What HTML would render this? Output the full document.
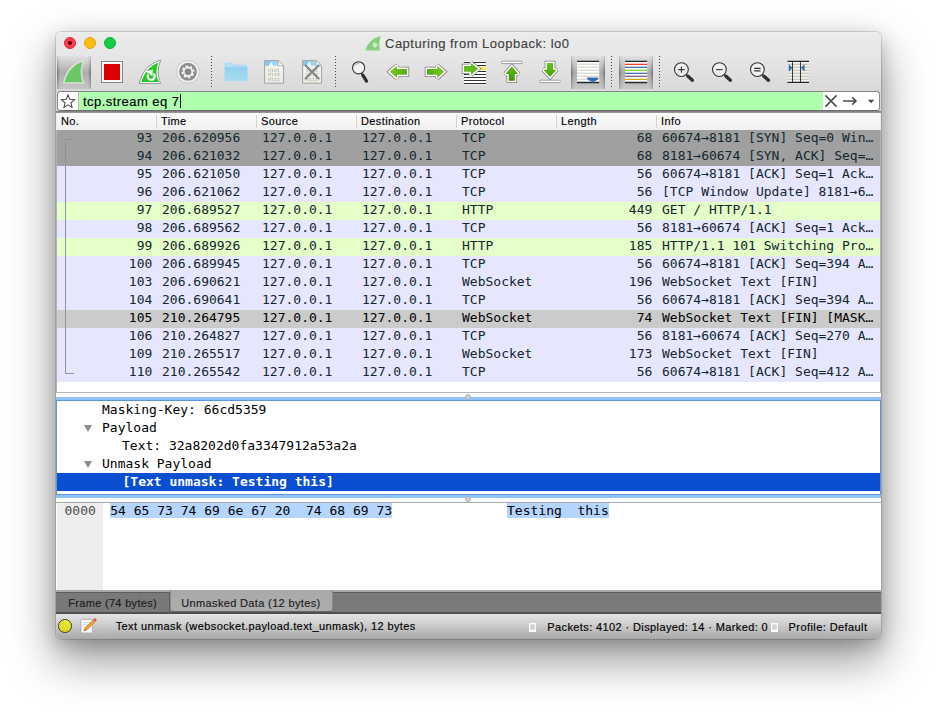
<!DOCTYPE html>
<html>
<head>
<meta charset="utf-8">
<title>Capturing from Loopback: lo0</title>
<style>
html,body{margin:0;padding:0;background:#fff;}
body{width:937px;height:719px;position:relative;overflow:hidden;font-family:"Liberation Sans",sans-serif;color:#000;}
.a{position:absolute;}
svg{position:absolute;overflow:visible;}
#win{left:56px;top:32px;width:825px;height:607px;border-radius:5px;background:#ececec;
 box-shadow:0 0 0 1px rgba(0,0,0,.13),0 20px 46px 2px rgba(0,0,0,.40),0 6px 18px rgba(0,0,0,.18);}
#chrome{left:56px;top:32px;width:825px;height:81px;border-radius:5px 5px 0 0;
 background:linear-gradient(#f4f4f4 0,#ebebeb 1px,#e7e7e7 22px,#d9d9d9 60px,#d6d6d6 82px);}
.tl{position:absolute;top:37px;width:12px;height:12px;border-radius:50%;box-sizing:border-box;}
#title{left:385px;top:36px;font-size:13px;line-height:16px;color:#3d3d3d;letter-spacing:.5px;-webkit-text-stroke:.12px #3d3d3d;white-space:nowrap;}
.pressed{top:56px;width:34px;height:33px;background:linear-gradient(rgba(0,0,0,.02),rgba(0,0,0,.23) 50%,rgba(0,0,0,.09));}
.pressed:before,.pressed:after{content:"";position:absolute;top:0;height:33px;width:3px;-webkit-mask-image:linear-gradient(rgba(0,0,0,.3),#000 45%,#000 60%,rgba(0,0,0,.4));mask-image:linear-gradient(rgba(0,0,0,.3),#000 45%,#000 60%,rgba(0,0,0,.4));}
.pressed:before{left:0;background:linear-gradient(to right,rgba(0,0,0,.36),rgba(0,0,0,.14) 1.5px,rgba(0,0,0,0));}
.pressed:after{right:0;background:linear-gradient(to left,rgba(0,0,0,.36),rgba(0,0,0,.14) 1.5px,rgba(0,0,0,0));}
.sep{top:56px;width:1px;height:31px;background:repeating-linear-gradient(#4a4a4a 0,#4a4a4a 1px,transparent 1px,transparent 3px);}
#fbox{left:57px;top:91px;width:823px;height:20px;box-sizing:border-box;border:1px solid #858585;border-bottom-color:#6c6c6c;border-radius:3.5px;background:#fff;overflow:hidden;}
#fgreen{left:20.4px;top:0;width:744.4px;height:18px;background:#afffaf;border-left:1px solid #bdbdbd;box-sizing:border-box;}
#ftext{left:83px;top:94px;font-size:13px;line-height:16px;letter-spacing:.45px;-webkit-text-stroke:.15px;white-space:nowrap;}
#fshadow{left:56px;top:111px;width:825px;height:2px;background:linear-gradient(#7b7b7b,#a0a0a0);}
#hdr{left:57px;top:113px;width:823px;height:17px;background:linear-gradient(#fafafa,#f1f1f1);font-size:11px;line-height:13px;letter-spacing:.4px;-webkit-text-stroke:.15px #000;}
#hdr span{position:absolute;top:2px;}
#hdr i{position:absolute;top:2px;width:1px;height:13px;background:#d2d2d2;}
.mono{font-family:"DejaVu Sans Mono","Liberation Mono",monospace;font-size:13px;}
#list{left:56px;top:130px;width:825px;height:263px;background:#fff;box-sizing:border-box;border:1px solid #b2b2b2;border-top:0;}
#rows{left:57px;top:130px;width:823px;color:#12272e;}
.row{position:relative;height:18px;line-height:18px;white-space:pre;}
.row span{position:absolute;top:-1px;}
.c0{left:0;width:95.3px;text-align:right;}
.c1{left:105px}.c2{left:205px}.c3{left:305px}.c4{left:405px}
.c5{left:500px;width:95.3px;text-align:right;}
.c6{left:605px}
.tcp{background:#e7e6ff}.grn{background:#e4ffc7}.syn{background:#a0a0a0}.sel{background:#cbcbcb;color:#000}
.split{left:56px;width:825px;background:#fbfbfb;}
.dot{width:6px;height:6px;border-radius:50%;background:#d2d2d2;border:1px solid #adadad;box-sizing:border-box;}
#detail{left:0;top:7px;width:825px;height:95px;box-sizing:border-box;border:1px solid #5f95d8;background:#fff;box-shadow:0 0 0 3px #8fc3fd;}
#dclip{left:56px;top:393px;width:825px;height:110px;overflow:hidden;}
.dl{position:absolute;left:57px;width:823px;height:18px;line-height:18px;white-space:pre;}
.tri{position:absolute;width:0;height:0;border-left:4.5px solid transparent;border-right:4.5px solid transparent;border-top:7px solid #8c8c8c;}
#hex{left:56px;top:502px;width:825px;height:88px;background:#fff;box-sizing:border-box;border-top:1px solid #aaa;}
#hexcol{left:57px;top:503px;width:46px;height:87px;background:#ededed;}
.hl{background:#b5d5ff;}
#tabs{left:56px;top:590px;width:825px;height:24px;background:linear-gradient(#5c5c5c,#5c5c5c 1px,#7a7a7a 1px);box-sizing:border-box;border-top:2px solid #a9a9a9;border-bottom:2px solid #505050;}
#status{left:56px;top:614px;width:825px;height:25px;border-radius:0 0 5px 5px;background:linear-gradient(#e3e3e3,#cfcfcf 40%,#a8a8a8);}
.st{position:absolute;-webkit-text-stroke:.15px;font-size:11px;line-height:13px;white-space:nowrap;top:621px;}
.grip{position:absolute;top:622.5px;width:7px;height:9.5px;background:#fbfbfb;}
.grip:after{content:"";position:absolute;left:0.7px;top:1.9px;width:5.4px;height:5.4px;border-radius:50%;background:#d4d4d4;}
</style>
</head>
<body>
<div class="a" id="win"></div>
<div class="a" id="chrome"></div>

<!-- traffic lights -->
<div class="tl" style="left:64px;background:#fc3f4b;border:1px solid #e0262f"></div>
<div class="a" style="left:67.7px;top:40.7px;width:4.6px;height:4.6px;border-radius:50%;background:#4d0003"></div>
<div class="tl" style="left:84px;background:#fdbc10;border:1px solid #dfa21b"></div>
<div class="tl" style="left:104px;background:#14cb45;border:1px solid #10b23a"></div>

<!-- title -->
<svg style="left:0;top:0" width="400" height="60" viewBox="0 0 400 60">
 <defs><linearGradient id="gT" x1="0" x2="0" y1="0" y2="1"><stop offset="0" stop-color="#82d27a"/><stop offset=".8" stop-color="#7fce77"/><stop offset="1" stop-color="#a4d89f"/></linearGradient></defs>
 <path d="M365.2,50.8 C367.2,43.6 372.4,37.8 380.9,35.9 C378.7,41 378.7,46 380.1,50.8 Z" fill="url(#gT)"/>
 <circle cx="375" cy="45" r="2.2" fill="#cdeec9" stroke="#c3e9be" stroke-width="1.4" stroke-dasharray="1.1 0.9"/>
</svg>
<div class="a" id="title">Capturing from Loopback: lo0</div>

<!-- toolbar -->
<div class="a pressed" style="left:57px"></div>
<div class="a pressed" style="left:571px"></div>
<div class="a pressed" style="left:619px"></div>
<div class="a sep" style="left:211px"></div>
<div class="a sep" style="left:335px"></div>
<div class="a sep" style="left:611px"></div>
<div class="a sep" style="left:659px"></div>

<svg id="tb" style="left:0;top:0" width="937" height="95" viewBox="0 0 937 95">
 <defs>
  <linearGradient id="gL" x1="0" x2="1" y1="0" y2="0"><stop offset="0" stop-color="#79c72c"/><stop offset="1" stop-color="#55a90f"/></linearGradient>
  <linearGradient id="gR" x1="0" x2="1" y1="0" y2="0"><stop offset="0" stop-color="#55a90f"/><stop offset="1" stop-color="#79c72c"/></linearGradient>
  <linearGradient id="gU" x1="0" x2="0" y1="0" y2="1"><stop offset="0" stop-color="#66bb1c"/><stop offset="1" stop-color="#3f900b"/></linearGradient>
  <linearGradient id="gD" x1="0" x2="0" y1="0" y2="1"><stop offset="0" stop-color="#6cc020"/><stop offset="1" stop-color="#4a9f0e"/></linearGradient>
  <linearGradient id="gP" x1="0" x2="0" y1="0" y2="1"><stop offset="0" stop-color="#f6f6f2"/><stop offset="1" stop-color="#ebebe3"/></linearGradient>
  <linearGradient id="gH" x1="0" x2="1" y1="0" y2="0"><stop offset="0" stop-color="#7dc1ed"/><stop offset="1" stop-color="#a9d8f4"/></linearGradient>
  <linearGradient id="gF" x1="0" x2="0" y1="0" y2="1"><stop offset="0" stop-color="#92d1ef"/><stop offset="1" stop-color="#a7dbf2"/></linearGradient>
 </defs>
 <!-- start capture fin -->
 <path d="M63.6,83 C66,72.5 72.5,63.5 84,60.6 C80.6,68 80.6,76 83.8,83 Z" fill="#69c861" stroke="#dcdcdc" stroke-width="1.6" stroke-linejoin="round"/>
 <!-- stop -->
 <rect x="101.5" y="61.5" width="21" height="21" fill="#f6f6f6" stroke="#868686" stroke-width="1"/>
 <rect x="104" y="64" width="16" height="16" fill="#dc0000"/>
 <!-- restart fin -->
 <path d="M139.2,83.4 C141.6,72.8 148.4,63.4 160.8,60.2 C157.4,67.6 157.2,76 160.6,83.4 Z" fill="#fff" stroke="#929292" stroke-width="1" stroke-linejoin="round"/>
 <path d="M141.5,81.9 C143.8,73.4 149.4,65.8 158.4,62.4 C155.7,69 155.9,76 158.9,81.9 Z" fill="#1fcb1f"/>
 <path d="M153.45,73.62 A3.5,3.5 0 1 1 148.33,74.3" fill="none" stroke="#fff" stroke-width="2.2"/>
 <path d="M145.4,71.5 L152.9,69.5 L152.3,76.8 L150.4,74.6 Z" fill="#fff"/>
 <!-- options gear -->
 <circle cx="188" cy="71.8" r="11.3" fill="#f4f4f4" stroke="#c4c4c4" stroke-width="0.9"/>
 <circle cx="188" cy="71.8" r="9" fill="#8e8e8e"/>
 <g fill="#efefef">
  <circle cx="188" cy="71.8" r="5.2"/>
  <g transform="translate(188 71.8) rotate(-12)">
   <rect x="-1.2" y="-6.5" width="2.4" height="13"/>
   <rect x="-1.2" y="-6.5" width="2.4" height="13" transform="rotate(45)"/>
   <rect x="-1.2" y="-6.5" width="2.4" height="13" transform="rotate(90)"/>
   <rect x="-1.2" y="-6.5" width="2.4" height="13" transform="rotate(135)"/>
  </g>
 </g>
 <circle cx="188" cy="71.8" r="3.3" fill="#878787"/>
 <!-- open folder -->
 <path d="M224.9,64.1 q0,-1.2 1.2,-1.2 h5 q0.8,0 1.3,0.7 l1,1.5 h12.6 q1.2,0 1.2,1.2 v13.2 q0,1.2 -1.2,1.2 h-19.9 q-1.2,0 -1.2,-1.2 Z" fill="#b1dff4" stroke="#9dd3ee" stroke-width="0.5"/>
 <path d="M224.9,66.9 h22.3 v12.6 q0,1.2 -1.2,1.2 h-19.9 q-1.2,0 -1.2,-1.2 Z" fill="url(#gF)"/>
 <!-- save file -->
 <g>
  <path d="M264.6,60.6 h13.6 l5.4,5.2 v17.4 h-19 Z" fill="url(#gP)" stroke="#a2a2a2" stroke-width="1" stroke-linejoin="round"/>
  <path d="M265.1,61.1 h13 l0.4,4.7 h-13.4 Z" fill="url(#gH)"/>
  <path d="M268.6,66.2 C269.6,63.6 270.6,62.4 272.4,61.5 C272,63.2 272.4,64.8 273.6,66.2 Z" fill="#f6f6f2"/>
  <path d="M278.2,60.6 v5.2 h5.4 Z" fill="#fbfbf9" stroke="#a8a8a8" stroke-width="0.8" stroke-linejoin="round"/>
  <text x="274" y="71.9" font-family="Liberation Mono, monospace" font-size="5" fill="#a9a9a6" text-anchor="middle" text-rendering="geometricPrecision" opacity="0.98">0101</text>
  <text x="274" y="76.4" font-family="Liberation Mono, monospace" font-size="5" fill="#a9a9a6" text-anchor="middle" text-rendering="geometricPrecision" opacity="0.98">0110</text>
  <text x="274" y="81" font-family="Liberation Mono, monospace" font-size="5" fill="#a9a9a6" text-anchor="middle" text-rendering="geometricPrecision" opacity="0.98">0111</text>
 </g>
 <!-- close file -->
 <g transform="translate(38 0)">
  <path d="M264.6,60.6 h13.6 l5.4,5.2 v17.4 h-19 Z" fill="url(#gP)" stroke="#a2a2a2" stroke-width="1" stroke-linejoin="round"/>
  <path d="M265.1,61.1 h13 l0.4,4.7 h-13.4 Z" fill="url(#gH)"/>
  <path d="M268.6,66.2 C269.6,63.6 270.6,62.4 272.4,61.5 C272,63.2 272.4,64.8 273.6,66.2 Z" fill="#f6f6f2"/>
  <path d="M278.2,60.6 v5.2 h5.4 Z" fill="#fbfbf9" stroke="#a8a8a8" stroke-width="0.8" stroke-linejoin="round"/>
  <text x="274" y="71.9" font-family="Liberation Mono, monospace" font-size="5" fill="#a9a9a6" text-anchor="middle" text-rendering="geometricPrecision" opacity="0.98">0101</text>
  <text x="274" y="76.4" font-family="Liberation Mono, monospace" font-size="5" fill="#a9a9a6" text-anchor="middle" text-rendering="geometricPrecision" opacity="0.98">0110</text>
  <text x="274" y="81" font-family="Liberation Mono, monospace" font-size="5" fill="#a9a9a6" text-anchor="middle" text-rendering="geometricPrecision" opacity="0.98">0111</text>
  <path d="M267.6,65.4 L280.6,78.6 M280.6,65.4 L267.6,78.6" stroke="#828688" stroke-width="2.1" stroke-linecap="round"/>
 </g>
 <!-- find -->
 <path d="M361.4,72.6 L362.6,75" stroke="#2c3234" stroke-width="1.6"/><path d="M362.8,75.2 L366.5,81.1" stroke="#2c3234" stroke-width="3.3" stroke-linecap="round"/>
 <circle cx="358.6" cy="67.8" r="6.1" fill="#f3f3f3" stroke="#333" stroke-width="1.1"/>
 <path d="M354.7,66.2 A4.3,4.3 0 0 1 359,63.5" fill="none" stroke="#555" stroke-width="0.7"/><path d="M355.2,65.4 A3.6,3.6 0 0 1 357.6,64" fill="none" stroke="#fff" stroke-width="0.9"/>
 <!-- back arrow -->
 <path d="M389.8,71.8 L396.9,65.7 V69.1 H406.9 V74.7 H396.9 V78 Z" fill="none" stroke="#7c7c7c" stroke-width="4.5" stroke-linejoin="miter" stroke-miterlimit="2"/>
 <path d="M389.8,71.8 L396.9,65.7 V69.1 H406.9 V74.7 H396.9 V78 Z" fill="#fff" stroke="#fdfdfd" stroke-width="3" stroke-linejoin="miter" stroke-miterlimit="2"/>
 <path d="M389.8,71.8 L396.9,65.7 V69.1 H406.9 V74.7 H396.9 V78 Z" fill="url(#gL)"/>
 <!-- forward arrow -->
 <path d="M444.2,71.8 L437.3,65.7 V69.1 H427 V74.7 H437.3 V78 Z" fill="none" stroke="#7c7c7c" stroke-width="4.5" stroke-linejoin="miter" stroke-miterlimit="2"/>
 <path d="M444.2,71.8 L437.3,65.7 V69.1 H427 V74.7 H437.3 V78 Z" fill="#fff" stroke="#fdfdfd" stroke-width="3" stroke-linejoin="miter" stroke-miterlimit="2"/>
 <path d="M444.2,71.8 L437.3,65.7 V69.1 H427 V74.7 H437.3 V78 Z" fill="url(#gR)"/>
 <!-- go to packet -->
 <rect x="464" y="61.6" width="22" height="22.8" fill="#fff"/>
 <path d="M464,62.5 H486 M464,65.5 H486 M464,71.5 H486 M464,74.5 H486 M464,77.5 H486 M464,80.5 H486 M464,83.5 H486" stroke="#2e3436" stroke-width="1"/>
 <rect x="479" y="66.9" width="7" height="3.2" fill="#fce94f"/>
 <path d="M478.2,68.7 L470.9,63.1 V66.1 H464 V71.8 H470.9 V74.9 Z" fill="none" stroke="#7c7c7c" stroke-width="4.5" stroke-linejoin="miter" stroke-miterlimit="2"/>
 <path d="M478.2,68.7 L470.9,63.1 V66.1 H464 V71.8 H470.9 V74.9 Z" fill="#fff" stroke="#fdfdfd" stroke-width="3" stroke-linejoin="miter" stroke-miterlimit="2"/>
 <path d="M478.2,68.7 L470.9,63.1 V66.1 H464 V71.8 H470.9 V74.9 Z" fill="#66bb1e"/>
 <!-- first packet -->
 <rect x="501.4" y="61.2" width="21" height="2.4" rx="1.2" fill="#fdfdfd" stroke="#7e7e7e" stroke-width="0.7"/>
 <path d="M511.8,66.5 L518.4,73.9 H514.8 V80.7 H508.8 V73.9 H505.3 Z" fill="none" stroke="#7c7c7c" stroke-width="4.5" stroke-linejoin="miter" stroke-miterlimit="2"/>
 <path d="M511.8,66.5 L518.4,73.9 H514.8 V80.7 H508.8 V73.9 H505.3 Z" fill="#fff" stroke="#fdfdfd" stroke-width="3" stroke-linejoin="miter" stroke-miterlimit="2"/>
 <path d="M511.8,66.5 L518.4,73.9 H514.8 V80.7 H508.8 V73.9 H505.3 Z" fill="url(#gU)"/>
 <!-- last packet -->
 <path d="M550,76.9 L556.5,69.8 H553.1 V63.1 H546.9 V69.8 H543.4 Z" fill="none" stroke="#7c7c7c" stroke-width="4.5" stroke-linejoin="miter" stroke-miterlimit="2"/>
 <path d="M550,76.9 L556.5,69.8 H553.1 V63.1 H546.9 V69.8 H543.4 Z" fill="#fff" stroke="#fdfdfd" stroke-width="3" stroke-linejoin="miter" stroke-miterlimit="2"/>
 <path d="M550,76.9 L556.5,69.8 H553.1 V63.1 H546.9 V69.8 H543.4 Z" fill="url(#gD)"/>
 <rect x="539.4" y="80.2" width="21" height="2.4" rx="1.2" fill="#fdfdfd" stroke="#7e7e7e" stroke-width="0.7"/>
 <!-- autoscroll -->
 <rect x="577" y="61" width="22.2" height="22" fill="#fff"/>
 <path d="M577,64.2 H599.2 M577,67.2 H599.2 M577,70.2 H599.2 M577,73.2 H599.2 M577,76.2 H599.2 M577,79.2 H599.2" stroke="#c6c6bd" stroke-width="0.9"/>
 <path d="M577,61.3 H599.2 M577,82.5 H599.2" stroke="#22282a" stroke-width="1.3"/>
 <path d="M587,77.4 H598.4 Q598.2,80.2 595,81 Q593.4,81.6 592.7,83.2 Q592,81.6 590.4,81 Q587.2,80.2 587,77.4 Z" fill="#3768ad"/>
 <!-- colorize -->
 <rect x="625" y="61" width="22.2" height="22" fill="#fff"/>
 <path d="M625,61.3 H647.2 M625,82.5 H647.2" stroke="#22282a" stroke-width="1.3"/>
 <path d="M625,64.3 H647.2" stroke="#ef2929" stroke-width="1.2"/>
 <path d="M625,67.3 H647.2" stroke="#3465a4" stroke-width="1.2"/>
 <path d="M625,70.3 H647.2" stroke="#73d216" stroke-width="1.2"/>
 <path d="M625,73.3 H647.2" stroke="#3465a4" stroke-width="1.2"/>
 <path d="M625,76.3 H647.2" stroke="#75507b" stroke-width="1.2"/>
 <path d="M625,79.3 H647.2" stroke="#c4a000" stroke-width="1.2"/>
 <!-- zoom in -->
 <g id="mag">
  <path d="M686,74.4 L688,76.2" stroke="#2c3234" stroke-width="1.8"/><path d="M688,76.3 L692.4,80.2" stroke="#2c3234" stroke-width="3.4" stroke-linecap="round"/>
  <circle cx="681.4" cy="69.6" r="6.9" fill="#f1f1f1" stroke="#333" stroke-width="1.1"/>
 </g>
 <path d="M678.2,69.6 H684.6 M681.4,66.4 V72.8" stroke="#333" stroke-width="1.1"/>
 <!-- zoom out -->
 <g transform="translate(38 0)">
  <path d="M686,74.4 L688,76.2" stroke="#2c3234" stroke-width="1.8"/><path d="M688,76.3 L692.4,80.2" stroke="#2c3234" stroke-width="3.4" stroke-linecap="round"/>
  <circle cx="681.4" cy="69.6" r="6.9" fill="#f1f1f1" stroke="#333" stroke-width="1.1"/>
  <path d="M678.2,69.6 H684.6" stroke="#333" stroke-width="1.1"/>
 </g>
 <!-- zoom reset -->
 <g transform="translate(76 0)">
  <path d="M686,74.4 L688,76.2" stroke="#2c3234" stroke-width="1.8"/><path d="M688,76.3 L692.4,80.2" stroke="#2c3234" stroke-width="3.4" stroke-linecap="round"/>
  <circle cx="681.4" cy="69.6" r="6.9" fill="#f1f1f1" stroke="#333" stroke-width="1.1"/>
  <path d="M678.2,68.4 H684.6 M678.2,70.9 H684.6" stroke="#333" stroke-width="1.1"/>
 </g>
 <!-- resize columns -->
 <rect x="787.4" y="61" width="21.6" height="21.4" fill="#f4f4ee"/>
 <path d="M787.4,64.3 H809 M787.4,67.3 H809 M787.4,70.3 H809 M787.4,73.3 H809 M787.4,76.3 H809 M787.4,79.3 H809" stroke="#b9b9b0" stroke-width="1.1"/>
 <path d="M787.4,61.3 H809 M787.4,82.3 H809" stroke="#22282a" stroke-width="1.2"/>
 <path d="M792.5,61 V82.6 M800.5,61 V82.6" stroke="#33393b" stroke-width="1"/>
 <path d="M788.8,64.2 L792.4,67.8 L788.8,71.4 Z M804.6,64.2 L801,67.8 L804.6,71.4 Z" fill="#3465a4"/>
</svg>

<!-- filter bar -->
<div class="a" id="fshadow"></div>
<div class="a" id="fbox"><div class="a" id="fgreen"></div></div>
<svg style="left:0;top:0" width="100" height="115" viewBox="0 0 100 115">
 <path d="M68.00,94.90 L69.82,99.29 L74.56,99.67 L70.95,102.76 L72.06,107.38 L68.00,104.90 L63.94,107.38 L65.05,102.76 L61.44,99.67 L66.18,99.29 Z" fill="none" stroke="#4a4a4a" stroke-width="1.05" stroke-linejoin="miter"/>
</svg>
<div class="a" id="ftext">tcp.stream eq 7</div>
<div class="a" style="left:180.4px;top:94px;width:1px;height:14px;background:#000"></div>
<svg style="left:822px;top:92px" width="58" height="18" viewBox="0 0 58 18">
 <path d="M3.4,3.4 L14.6,14.6 M14.6,3.4 L3.4,14.6" stroke="#4a4a4a" stroke-width="1.5"/>
 <path d="M21,9 H34 M30.2,5.4 L34,9 L30.2,12.6" stroke="#4a4a4a" stroke-width="1.5" fill="none"/>
 <path d="M45.8,7.8 H52.4 L49.1,11.2 Z" fill="#4a4a4a"/>
</svg>

<!-- column header -->
<div class="a" id="hdr">
 <span style="left:4px">No.</span><i style="left:99px"></i>
 <span style="left:104px">Time</span><i style="left:199px"></i>
 <span style="left:204px">Source</span><i style="left:299px"></i>
 <span style="left:304px">Destination</span><i style="left:399px"></i>
 <span style="left:404px">Protocol</span><i style="left:499px"></i>
 <span style="left:504px">Length</span><i style="left:599px"></i>
 <span style="left:604px">Info</span>
</div>

<!-- packet list -->
<div class="a" id="list"></div>
<div class="a mono" id="rows">
  <div class="row syn"><span class="c0">93</span><span class="c1">206.620956</span><span class="c2">127.0.0.1</span><span class="c3">127.0.0.1</span><span class="c4">TCP</span><span class="c5">68</span><span class="c6">60674→8181 [SYN] Seq=0 Win…</span></div>
  <div class="row syn"><span class="c0">94</span><span class="c1">206.621032</span><span class="c2">127.0.0.1</span><span class="c3">127.0.0.1</span><span class="c4">TCP</span><span class="c5">68</span><span class="c6">8181→60674 [SYN, ACK] Seq=…</span></div>
  <div class="row tcp"><span class="c0">95</span><span class="c1">206.621050</span><span class="c2">127.0.0.1</span><span class="c3">127.0.0.1</span><span class="c4">TCP</span><span class="c5">56</span><span class="c6">60674→8181 [ACK] Seq=1 Ack…</span></div>
  <div class="row tcp"><span class="c0">96</span><span class="c1">206.621062</span><span class="c2">127.0.0.1</span><span class="c3">127.0.0.1</span><span class="c4">TCP</span><span class="c5">56</span><span class="c6">[TCP Window Update] 8181→6…</span></div>
  <div class="row grn"><span class="c0">97</span><span class="c1">206.689527</span><span class="c2">127.0.0.1</span><span class="c3">127.0.0.1</span><span class="c4">HTTP</span><span class="c5">449</span><span class="c6">GET / HTTP/1.1</span></div>
  <div class="row tcp"><span class="c0">98</span><span class="c1">206.689562</span><span class="c2">127.0.0.1</span><span class="c3">127.0.0.1</span><span class="c4">TCP</span><span class="c5">56</span><span class="c6">8181→60674 [ACK] Seq=1 Ack…</span></div>
  <div class="row grn"><span class="c0">99</span><span class="c1">206.689926</span><span class="c2">127.0.0.1</span><span class="c3">127.0.0.1</span><span class="c4">HTTP</span><span class="c5">185</span><span class="c6">HTTP/1.1 101 Switching Pro…</span></div>
  <div class="row tcp"><span class="c0">100</span><span class="c1">206.689945</span><span class="c2">127.0.0.1</span><span class="c3">127.0.0.1</span><span class="c4">TCP</span><span class="c5">56</span><span class="c6">60674→8181 [ACK] Seq=394 A…</span></div>
  <div class="row tcp"><span class="c0">103</span><span class="c1">206.690621</span><span class="c2">127.0.0.1</span><span class="c3">127.0.0.1</span><span class="c4">WebSocket</span><span class="c5">196</span><span class="c6">WebSocket Text [FIN]</span></div>
  <div class="row tcp"><span class="c0">104</span><span class="c1">206.690641</span><span class="c2">127.0.0.1</span><span class="c3">127.0.0.1</span><span class="c4">TCP</span><span class="c5">56</span><span class="c6">60674→8181 [ACK] Seq=394 A…</span></div>
  <div class="row sel"><span class="c0">105</span><span class="c1">210.264795</span><span class="c2">127.0.0.1</span><span class="c3">127.0.0.1</span><span class="c4">WebSocket</span><span class="c5">74</span><span class="c6">WebSocket Text [FIN] [MASK…</span></div>
  <div class="row tcp"><span class="c0">106</span><span class="c1">210.264827</span><span class="c2">127.0.0.1</span><span class="c3">127.0.0.1</span><span class="c4">TCP</span><span class="c5">56</span><span class="c6">8181→60674 [ACK] Seq=270 A…</span></div>
  <div class="row tcp"><span class="c0">109</span><span class="c1">210.265517</span><span class="c2">127.0.0.1</span><span class="c3">127.0.0.1</span><span class="c4">WebSocket</span><span class="c5">173</span><span class="c6">WebSocket Text [FIN]</span></div>
  <div class="row tcp"><span class="c0">110</span><span class="c1">210.265542</span><span class="c2">127.0.0.1</span><span class="c3">127.0.0.1</span><span class="c4">TCP</span><span class="c5">56</span><span class="c6">60674→8181 [ACK] Seq=412 A…</span></div>
</div>
<svg style="left:56px;top:130px" width="30" height="252" viewBox="0 0 30 252">
 <path d="M17.5,9.5 H9.5 V243.5 H18" fill="none" stroke="#8a949c" stroke-width="1"/>
</svg>

<!-- splitter 1 + detail pane -->
<div class="a split" style="top:393px;height:5px"></div>
<div class="a split" style="top:497px;height:5px"></div>
<div class="a" id="dclip"><div class="a" id="detail"></div></div>
<div class="a dot" style="left:465px;top:394px"></div>
<div class="a dot" style="left:465px;top:496.2px"></div>
<div class="mono">
 <div class="dl" style="top:401px"><span class="a" style="left:45px">Masking-Key: 66cd5359</span></div>
 <div class="dl" style="top:419px"><i class="tri" style="left:26.9px;top:6px"></i><span class="a" style="left:45px">Payload</span></div>
 <div class="dl" style="top:437px"><span class="a" style="left:65px">Text: 32a8202d0fa3347912a53a2a</span></div>
 <div class="dl" style="top:455px"><i class="tri" style="left:26.9px;top:6px"></i><span class="a" style="left:45px">Unmask Payload</span></div>
 <div class="dl" style="top:473px;background:#0a4fd2;color:#fff;font-weight:bold"><span class="a" style="left:65.5px">[Text unmask: Testing this]</span></div>
</div>

<!-- hex pane -->
<div class="a" id="hex"></div>
<div class="a" id="hexcol"></div>
<div class="a mono" style="left:64.5px;top:503px;height:15px;line-height:15px;color:#4d4d4d;white-space:pre">0000</div>
<div class="a mono hl" style="left:110.3px;top:503px;height:15px;line-height:15px;white-space:pre">54 65 73 74 69 6e 67 20  74 68 69 73</div>
<div class="a mono hl" style="left:507px;top:503px;height:15px;line-height:15px;white-space:pre">Testing  this</div>

<!-- tabs -->
<div class="a" id="tabs"></div>
<div class="a" style="left:56px;top:592px;width:114px;height:20px;box-sizing:border-box;border-top:1px solid #5c5c5c;border-right:1px solid #5c5c5c;background:#797979"></div>
<div class="a" style="left:170px;top:590px;width:163px;height:21.5px;box-sizing:border-box;border:1px solid #8a8a8a;border-bottom-color:#666;border-top:0;border-radius:0 0 4px 4px;background:linear-gradient(#a9a9a9,#adadad)"></div>
<div class="st" style="left:68.2px;top:597px;letter-spacing:.32px;color:#1c1c1c">Frame (74 bytes)</div>
<div class="st" style="left:181.3px;top:597px;letter-spacing:.35px;color:#1c1c1c">Unmasked Data (12 bytes)</div>

<!-- status bar -->
<div class="a" id="status"></div>
<div class="a" style="left:58.2px;top:619.3px;width:13.6px;height:13.6px;box-sizing:border-box;border-radius:50%;background:linear-gradient(#ecec3c,#d6d622);border:1px solid #3c3c28"></div>
<svg style="left:80px;top:617px" width="18" height="18" viewBox="0 0 18 18">
 <rect x="1" y="2.4" width="11.6" height="13.6" rx="0.8" fill="#fbfbfb" stroke="#a8a8a8" stroke-width="0.8"/>
 <path d="M3,5.6 H10 M3,7.8 H10 M3,10 H8 M3,12.2 H7" stroke="#c9c9c9" stroke-width="0.8"/>
 <path d="M4.2,13.8 L5.4,10.6 L13.2,2.8 L15.2,4.8 L7.4,12.6 Z" fill="#f0a030" stroke="#b06a10" stroke-width="0.5"/>
 <path d="M13.2,2.8 L14.4,1.6 Q15.4,0.8 16.2,1.8 Q17,2.8 16.4,3.6 L15.2,4.8 Z" fill="#e84a5a"/>
 <path d="M4.2,13.8 L4.7,12.4 L5.6,13.3 Z" fill="#333"/>
</svg>
<div class="st" style="left:115.7px;top:620px;letter-spacing:.4px">Text unmask (websocket.payload.text_unmask), 12 bytes</div>
<div class="grip" style="left:529px"></div>
<div class="st" style="left:547.3px;letter-spacing:.39px">Packets: 4102 · Displayed: 14 · Marked: 0</div>
<div class="grip" style="left:771px"></div>
<div class="st" style="left:788.6px;letter-spacing:.42px">Profile: Default</div>
</body>
</html>
